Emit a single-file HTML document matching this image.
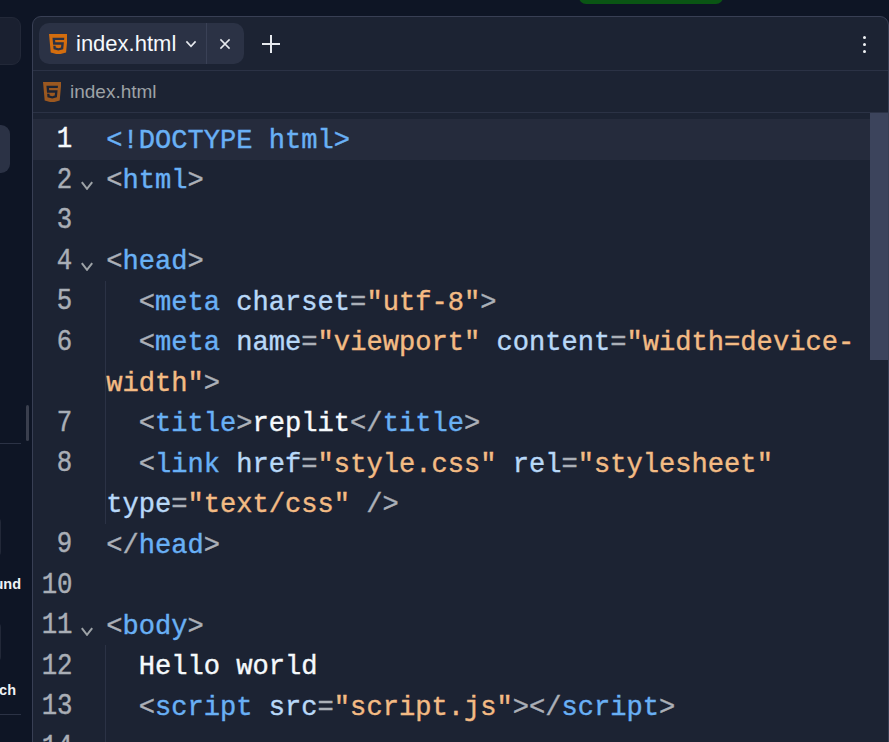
<!DOCTYPE html>
<html>
<head>
<meta charset="utf-8">
<style>
*{box-sizing:border-box;margin:0;padding:0}
html,body{width:889px;height:742px;overflow:hidden;background:#0e1525;font-family:"Liberation Sans",sans-serif;position:relative}
.abs{position:absolute}
.sb1{left:-12px;top:17px;width:33px;height:48px;border-radius:9px;background:#1a2030;border:1px solid #222838}
.sb2{left:-30px;top:125px;width:40px;height:48px;border-radius:9px;background:#2b3245}
.sbthumb{left:26px;top:405px;width:3px;height:36px;border-radius:2px;background:#3a3f4e}
.sbdiv1{left:0;top:443px;width:21px;height:1px;background:#2b3245}
.sbbox1{left:-40px;top:516px;width:41px;height:42px;border:1px solid #222838;border-radius:6px}
.sbbox2{left:-40px;top:621px;width:41px;height:42px;border:1px solid #222838;border-radius:6px}
.sbt1{left:-79px;width:100px;text-align:right;top:576px;font-size:14.5px;line-height:17px;color:#eef1f5;font-weight:bold}
.sbt2{left:-79px;width:95px;text-align:right;top:681.5px;font-size:14.5px;line-height:17px;color:#eef1f5;font-weight:bold}
.sbdiv2{left:0;top:714px;width:21px;height:1px;background:#2b3245}
.green{left:579px;top:-10.5px;width:144px;height:14px;border-radius:8px;background:#0a5514}
.panel{left:32px;top:16px;width:857px;height:800px;border:1px solid #383f54;border-radius:9px;background:#1c2333;overflow:hidden}
.hdr{left:0;top:0;width:100%;height:54px;border-bottom:1px solid #2b3245}
.tab{left:6px;top:6px;width:205px;height:41px;border-radius:10px;background:#2b3245}
.tabsep{left:167px;top:0;width:1px;height:41px;background:#3a4156}
.tabtxt{left:37px;top:8.5px;font-size:22px;color:#f5f9fc;line-height:24px}
.crumb{left:0;top:54px;width:100%;height:42px;border-bottom:1px solid #2b3245}
.crumbtxt{left:37px;top:11px;font-size:19px;color:#9da2a6;line-height:20px}
.editor{left:0;top:98px;width:100%;height:700px}
.line{position:absolute;left:33px;width:837px;height:40.5px;font-family:"Liberation Mono",monospace;font-size:27.1px;line-height:40.5px;white-space:pre;-webkit-text-stroke:0.4px currentColor}
.act{background:#252b3c;height:41.5px}
.ln{position:absolute;right:797.7px;top:1.5px;color:#a9aeb6;text-align:right;transform:scale(0.95,1.08);transform-origin:100% 70%}
.act .ln{color:#f5f9fc}
.code{position:absolute;left:73.2px;top:2px}
.fold{position:absolute;left:48px;top:22px;width:12px;height:9px}
.scrollthumb{left:870px;top:113px;width:18px;height:247px;background:#3c445c}
.dot{width:3.2px;height:3.2px;border-radius:50%;background:#f0f2f5}
.guide{width:1px;background:#2b3245}
.g1{left:105px;top:280.5px;height:243px}
.g2{left:105px;top:645px;height:97px}
.t{color:#69b0f5}.p{color:#abb0b8}.a{color:#b8d8f8}.s{color:#f3bb84}.w{color:#f5f9fc}
</style>
</head>
<body>
<div class="abs sb1"></div>
<div class="abs sb2"></div>
<div class="abs sbthumb"></div>
<div class="abs sbdiv1"></div>
<div class="abs sbbox1"></div>
<div class="abs sbt1">und</div>
<div class="abs sbbox2"></div>
<div class="abs sbt2">ch</div>
<div class="abs sbdiv2"></div>
<div class="abs green"></div>

<div class="abs panel">
  <div class="abs hdr">
    <div class="abs tab">
      <div class="abs tabtxt">index.html</div>
      <div class="abs tabsep"></div>
    </div>
  </div>
  <div class="abs crumb">
    <div class="abs crumbtxt">index.html</div>
  </div>
  <div class="abs editor"></div>
</div>
<div class="abs scrollthumb"></div>
<svg class="abs" style="left:48.5px;top:33.8px" width="18.8" height="20.6" viewBox="1.5 0 21 24" preserveAspectRatio="none"><path fill="#d36d0e" d="M1.5 0h21l-1.91 21.563L11.977 24l-8.564-2.438L1.5 0zm7.031 9.75l-.232-2.718 10.059.003.23-2.622L5.412 4.41l.698 8.01h9.126l-.326 3.426-2.91.804-2.955-.81-.188-2.11H6.248l.33 4.171L12 19.351l5.379-1.443.744-8.157H8.531z"/></svg>
<svg class="abs" style="left:42.8px;top:81.5px" width="18.4" height="20.6" viewBox="1.5 0 21 24" preserveAspectRatio="none"><path fill="#9b5820" d="M1.5 0h21l-1.91 21.563L11.977 24l-8.564-2.438L1.5 0zm7.031 9.75l-.232-2.718 10.059.003.23-2.622L5.412 4.41l.698 8.01h9.126l-.326 3.426-2.91.804-2.955-.81-.188-2.11H6.248l.33 4.171L12 19.351l5.379-1.443.744-8.157H8.531z"/></svg>
<svg class="abs" style="left:184px;top:38px" width="14" height="12" viewBox="0 0 14 12"><polyline points="2.4,3.4 7,8.4 11.6,3.4" fill="none" stroke="#e6e9ee" stroke-width="1.6"/></svg>
<svg class="abs" style="left:218px;top:37px" width="14" height="14" viewBox="0 0 14 14"><path d="M2.4,2.4 L11.6,11.6 M11.6,2.4 L2.4,11.6" fill="none" stroke="#e6e9ee" stroke-width="1.5"/></svg>
<svg class="abs" style="left:260px;top:33px" width="22" height="22" viewBox="0 0 22 22"><path d="M11,2 V20 M2,11 H20" fill="none" stroke="#e6e9ee" stroke-width="2"/></svg>
<div class="abs dot" style="left:862.6px;top:35.7px"></div>
<div class="abs dot" style="left:862.6px;top:42.7px"></div>
<div class="abs dot" style="left:862.6px;top:49.7px"></div>

<div class="abs guide g1"></div><div class="abs guide g2"></div>
<div class="line act" style="top:118.5px"><span class="ln">1</span><span class="code"><span class="t">&lt;!DOCTYPE html&gt;</span></span></div>
<div class="line" style="top:159.0px"><span class="ln">2</span><svg class="fold" viewBox="0 0 12 9"><polyline points="0.8,1.2 6,7.8 11.2,1.2" fill="none" stroke="#9da2a6" stroke-width="2"/></svg><span class="code"><span class="p">&lt;</span><span class="t">html</span><span class="p">&gt;</span></span></div>
<div class="line" style="top:199.5px"><span class="ln">3</span><span class="code"></span></div>
<div class="line" style="top:240.0px"><span class="ln">4</span><svg class="fold" viewBox="0 0 12 9"><polyline points="0.8,1.2 6,7.8 11.2,1.2" fill="none" stroke="#9da2a6" stroke-width="2"/></svg><span class="code"><span class="p">&lt;</span><span class="t">head</span><span class="p">&gt;</span></span></div>
<div class="line" style="top:280.5px"><span class="ln">5</span><span class="code">  <span class="p">&lt;</span><span class="t">meta</span> <span class="a">charset</span><span class="p">=</span><span class="s">"utf-8"</span><span class="p">&gt;</span></span></div>
<div class="line" style="top:321.0px"><span class="ln">6</span><span class="code">  <span class="p">&lt;</span><span class="t">meta</span> <span class="a">name</span><span class="p">=</span><span class="s">"viewport"</span> <span class="a">content</span><span class="p">=</span><span class="s">"width=device-</span></span></div>
<div class="line" style="top:361.5px"><span class="ln"></span><span class="code"><span class="s">width"</span><span class="p">&gt;</span></span></div>
<div class="line" style="top:402.0px"><span class="ln">7</span><span class="code">  <span class="p">&lt;</span><span class="t">title</span><span class="p">&gt;</span><span class="w">replit</span><span class="p">&lt;/</span><span class="t">title</span><span class="p">&gt;</span></span></div>
<div class="line" style="top:442.5px"><span class="ln">8</span><span class="code">  <span class="p">&lt;</span><span class="t">link</span> <span class="a">href</span><span class="p">=</span><span class="s">"style.css"</span> <span class="a">rel</span><span class="p">=</span><span class="s">"stylesheet"</span></span></div>
<div class="line" style="top:483.0px"><span class="ln"></span><span class="code"><span class="a">type</span><span class="p">=</span><span class="s">"text/css"</span> <span class="p">/&gt;</span></span></div>
<div class="line" style="top:523.5px"><span class="ln">9</span><span class="code"><span class="p">&lt;/</span><span class="t">head</span><span class="p">&gt;</span></span></div>
<div class="line" style="top:564.0px"><span class="ln">10</span><span class="code"></span></div>
<div class="line" style="top:604.5px"><span class="ln">11</span><svg class="fold" viewBox="0 0 12 9"><polyline points="0.8,1.2 6,7.8 11.2,1.2" fill="none" stroke="#9da2a6" stroke-width="2"/></svg><span class="code"><span class="p">&lt;</span><span class="t">body</span><span class="p">&gt;</span></span></div>
<div class="line" style="top:645.0px"><span class="ln">12</span><span class="code">  <span class="w">Hello world</span></span></div>
<div class="line" style="top:685.5px"><span class="ln">13</span><span class="code">  <span class="p">&lt;</span><span class="t">script</span> <span class="a">src</span><span class="p">=</span><span class="s">"script.js"</span><span class="p">&gt;&lt;/</span><span class="t">script</span><span class="p">&gt;</span></span></div>
<div class="line" style="top:726.0px"><span class="ln">14</span><span class="code"></span></div>
<!--END-->
</body>
</html>
